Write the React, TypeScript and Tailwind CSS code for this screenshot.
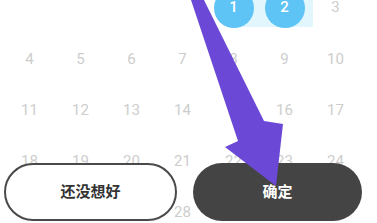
import type { ReactNode } from "react";

const rows: (number | null)[][] = [
  [null, null, null, null, 1, 2, 3],
  [4, 5, 6, 7, 8, 9, 10],
  [11, 12, 13, 14, 15, 16, 17],
  [18, 19, 20, 21, 22, 23, 24],
  [25, 26, 27, 28, 29, 30, 31],
];

const selected = [1, 2];

function DayCell({ day }: { day: number | null }) {
  if (day === null) return <div className="h-[51px]" />;
  const isSelected = selected.includes(day);
  return (
    <div className="flex h-[51px] items-center justify-center">
      {isSelected ? (
        <span className="grid h-10 w-10 place-items-center rounded-full bg-[#5ec4f6] text-[15px] leading-[14px] font-medium text-white">
          <span className="pt-[14px]">{day}</span>
        </span>
      ) : (
        <span className="text-[15px] leading-[14px] text-[#cdcdcd]">{day}</span>
      )}
    </div>
  );
}

function PillButton({ children, dark }: { children: ReactNode; dark?: boolean }) {
  return (
    <button
      type="button"
      className={
        dark
          ? "flex h-[58px] flex-1 items-center justify-center rounded-full bg-[#444444] text-[15px] font-bold text-white"
          : "flex h-[58px] flex-1 items-center justify-center rounded-full border-2 border-[#4a4a4a] bg-white text-[15px] font-bold text-[#333333]"
      }
    >
      {children}
    </button>
  );
}

export default function App() {
  return (
    <div
      className="relative h-[223px] w-[377px] overflow-hidden bg-white"
      style={{ fontFamily: 'Roboto, "Noto Sans CJK SC", sans-serif' }}
    >
      {/* range band behind the selected days */}
      <div className="absolute left-[233px] top-0 h-[27px] w-[80px] bg-[#e2f6fd]" />

      <div className="relative mt-[-18px] ml-[4px] grid w-[357px] grid-cols-7">
        {rows.flat().map((day, i) =>
          i < 7 && day !== null ? (
            <div key={i} className="flex h-[51px] items-start justify-center">
              {selected.includes(day) ? (
                <span className="mt-[6px] flex h-10 w-10 justify-center rounded-full bg-[#5ec4f6] pt-[12px] text-[15px] leading-[14px] font-medium text-white">
                  {day}
                </span>
              ) : (
                <span className="mt-[18px] text-[15px] leading-[14px] text-[#cdcdcd]">{day}</span>
              )}
            </div>
          ) : (
            <DayCell key={i} day={day} />
          )
        )}
      </div>

      <div className="absolute bottom-[2px] left-[4px] flex w-[358px] gap-4">
        <PillButton>还没想好</PillButton>
        <PillButton dark>确定</PillButton>
      </div>

      <svg className="pointer-events-none absolute inset-0" width="377" height="223" viewBox="0 0 377 223">
        <polygon
          points="191,0 204,0 264,121 283,124 276,186 225,147 238,141"
          fill="#6b49d6"
        />
      </svg>
    </div>
  );
}
